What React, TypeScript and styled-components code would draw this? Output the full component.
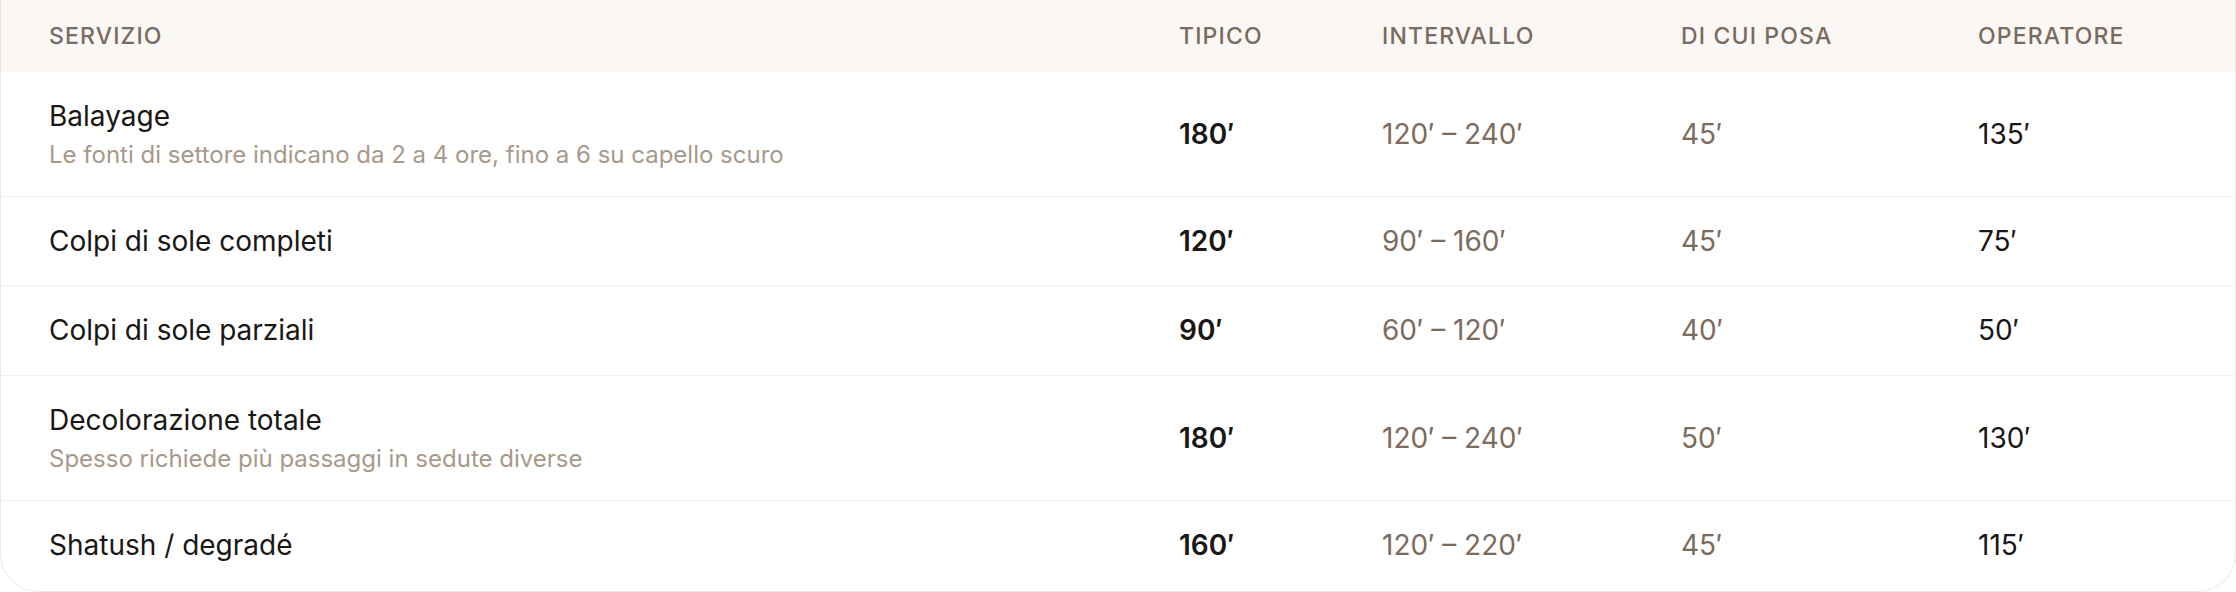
import React from "react";
import styled, { createGlobalStyle } from "styled-components";

const GlobalStyle = createGlobalStyle`
  html, body {
    margin: 0;
    padding: 0;
    background: #ffffff;
  }
  body {
    font-family: Inter, "Noto Sans", "Liberation Sans", sans-serif;
    color: #1c1917;
  }
`;

const Card = styled.div`
  width: 2236px;
  height: 592px;
  box-sizing: border-box;
  background: #ffffff;
  border: 1.5px solid #ece7e2;
  border-top: none;
  border-radius: 0 0 38px 38px;
  overflow: hidden;
`;

const Row = styled.div<{ $head?: boolean }>`
  display: grid;
  grid-template-columns: 1130px 203px 299px 297px 1fr;
  align-items: center;
  background: ${(p) => (p.$head ? "#fbf7f4" : "transparent")};
  border-bottom: ${(p) => (p.$head ? "none" : "1.6px solid #f4f0ec")};
  &:last-child {
    border-bottom: none;
  }
`;

const HeadCell = styled.div`
  padding: 18.5px 48px;
  font-size: 23px;
  line-height: 34.5px;
  font-weight: 500;
  letter-spacing: 0.05em;
  text-transform: uppercase;
  color: #7a6b60;
  white-space: nowrap;
`;

const NameCell = styled.div`
  padding: 23.2px 48px;
  display: flex;
  flex-direction: column;
`;

const Name = styled.span`
  font-size: 28px;
  line-height: 42px;
  font-weight: 400;
  color: #1a1715;
`;

const Note = styled.span`
  font-size: 24px;
  line-height: 36px;
  color: #a8998b;
`;

const ValueCell = styled.div<{ $tone: "strong" | "muted" | "plain" }>`
  padding: 0 48px;
  font-size: 28px;
  line-height: 42px;
  font-weight: ${(p) => (p.$tone === "strong" ? 600 : 400)};
  color: ${(p) => (p.$tone === "muted" ? "#7d6b5d" : "#1a1715")};
  white-space: nowrap;
`;

type Item = {
  name: string;
  note?: string;
  typical: string;
  range: string;
  pose: string;
  operator: string;
};

const items: Item[] = [
  {
    name: "Balayage",
    note: "Le fonti di settore indicano da 2 a 4 ore, fino a 6 su capello scuro",
    typical: "180′",
    range: "120′ – 240′",
    pose: "45′",
    operator: "135′",
  },
  { name: "Colpi di sole completi", typical: "120′", range: "90′ – 160′", pose: "45′", operator: "75′" },
  { name: "Colpi di sole parziali", typical: "90′", range: "60′ – 120′", pose: "40′", operator: "50′" },
  {
    name: "Decolorazione totale",
    note: "Spesso richiede più passaggi in sedute diverse",
    typical: "180′",
    range: "120′ – 240′",
    pose: "50′",
    operator: "130′",
  },
  { name: "Shatush / degradé", typical: "160′", range: "120′ – 220′", pose: "45′", operator: "115′" },
];

export default function App() {
  return (
    <>
      <GlobalStyle />
      <Card>
        <Row $head>
          <HeadCell>Servizio</HeadCell>
          <HeadCell>Tipico</HeadCell>
          <HeadCell>Intervallo</HeadCell>
          <HeadCell>Di cui posa</HeadCell>
          <HeadCell>Operatore</HeadCell>
        </Row>
        {items.map((it) => (
          <Row key={it.name}>
            <NameCell>
              <Name>{it.name}</Name>
              {it.note && <Note>{it.note}</Note>}
            </NameCell>
            <ValueCell $tone="strong">{it.typical}</ValueCell>
            <ValueCell $tone="muted">{it.range}</ValueCell>
            <ValueCell $tone="muted">{it.pose}</ValueCell>
            <ValueCell $tone="plain">{it.operator}</ValueCell>
          </Row>
        ))}
      </Card>
    </>
  );
}
